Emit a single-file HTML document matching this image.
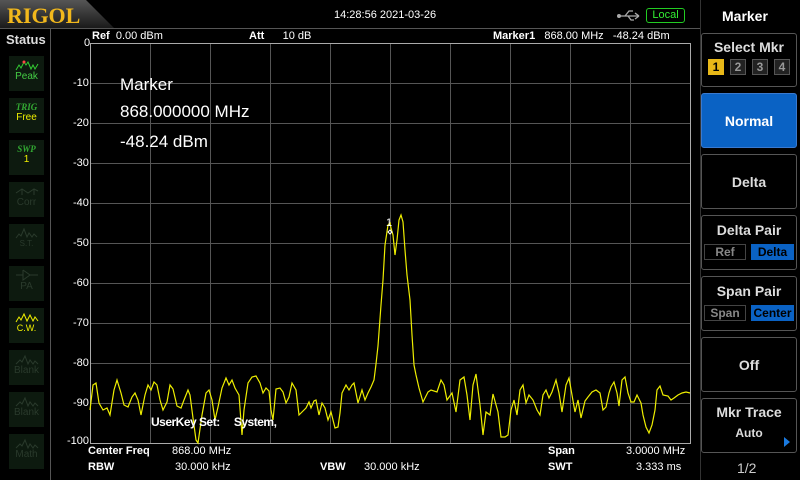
<!DOCTYPE html><html><head><style>
*{margin:0;padding:0;box-sizing:border-box}
body{width:800px;height:480px;background:#000;overflow:hidden;position:relative;font-family:"Liberation Sans",sans-serif;color:#fff}
.a{position:absolute;white-space:nowrap}
.tile{position:absolute;left:9px;width:35px;height:35px;background:#0d1a0f;text-align:center;font-size:10px}
.tile svg{display:block;margin:3px auto 0}
.btn{position:absolute;left:701px;width:96px;border:1px solid #555;border-radius:3px;text-align:center;font-weight:bold;font-size:14px;color:#ddd}
.lbl{font-size:11px;color:#fff}
.b{font-weight:bold}
</style></head><body>
<svg class="a" style="left:0;top:0" width="120" height="29"><defs><linearGradient id="g" x1="0" y1="0" x2="0" y2="1"><stop offset="0" stop-color="#555"/><stop offset="1" stop-color="#1a1a1a"/></linearGradient></defs><path d="M0 0H86L114 28H0Z" fill="url(#g)"/></svg>
<div class="a" style="left:7px;top:3px;font-family:'Liberation Serif',serif;font-weight:bold;font-size:22px;color:#f2b81c">RIGOL</div>
<div class="a" style="left:0;top:28px;width:700px;height:1px;background:#555"></div>
<div class="a" style="left:334px;top:9px;font-size:11px">14:28:56 2021-03-26</div>
<svg class="a" style="left:617px;top:10px" width="26" height="12"><path d="M1 6H22M22 6l-4-3M22 6l-4 3M8 6l4-5h4M11 6l3 4h3" stroke="#aaa" fill="none" stroke-width="1.3"/><circle cx="2" cy="6" r="2" fill="#aaa"/></svg>
<div class="a" style="left:646px;top:8px;width:39px;height:15px;border:1px solid #2c2;border-radius:3px;color:#3e3;font-size:11px;text-align:center;line-height:13px">Local</div>
<div class="a" style="left:50px;top:29px;width:1px;height:451px;background:#555"></div>
<div class="a" style="left:6px;top:32px;font-size:13px;font-weight:bold;color:#ddd">Status</div>
<div class="a" style="left:700px;top:0;width:1px;height:480px;background:#333"></div>

<div class="tile" style="top:56px;color:#4c4"><svg width="24" height="12"><path d="M1 11l3-5 2 3 3-6 2 3 2-3 3 7 2-4 2 4 3-5" stroke="#3c3" fill="none"/><circle cx="9" cy="3" r="1.5" fill="#f44"/></svg>Peak</div>
<div class="tile" style="top:98px;color:#ee0"><div style="font-family:'Liberation Serif',serif;font-style:italic;font-weight:bold;color:#3a3;font-size:9px;margin-top:4px">TRIG</div>Free</div>
<div class="tile" style="top:140px;color:#ee0"><div style="font-family:'Liberation Serif',serif;font-style:italic;font-weight:bold;color:#3a3;font-size:9px;margin-top:4px">SWP</div>1</div>
<div class="tile" style="top:182px;color:#2a3a2c"><svg width="24" height="12"><path d="M1 8l6-4 6 4 6-4 4 2M7 4v6M19 4v6" stroke="#2a3a2c" fill="none"/></svg>Corr</div>
<div class="tile" style="top:224px;color:#2a3a2c;font-size:8px"><svg width="24" height="12"><path d="M1 11l3-4 2 2 3-7 3 8 2-4 3 4 2-3 3 3" stroke="#2a3a2c" fill="none"/></svg>S.T.</div>
<div class="tile" style="top:266px;color:#2a3a2c"><svg width="24" height="12"><path d="M1 6h7M8 1v10l7-5-7-5M15 6h8" stroke="#2a3a2c" fill="none"/></svg>PA</div>
<div class="tile" style="top:308px;color:#ee0;font-size:9px"><svg width="24" height="12"><path d="M1 11l3-5 2 3 3-6 3 7 3-6 3 6 2-4 3 4" stroke="#ee0" fill="none"/></svg>C.W.</div>
<div class="tile" style="top:350px;color:#2a3a2c"><svg width="24" height="12"><path d="M1 11l4-4 2 2 3-6 3 8 2-4 3 4 2-3 3 3" stroke="#2a3a2c" fill="none"/></svg>Blank</div>
<div class="tile" style="top:392px;color:#2a3a2c"><svg width="24" height="12"><path d="M1 11l4-4 2 2 3-6 3 8 2-4 3 4 2-3 3 3" stroke="#2a3a2c" fill="none"/></svg>Blank</div>
<div class="tile" style="top:434px;color:#2a3a2c"><svg width="24" height="12"><path d="M1 11l4-4 2 2 3-6 3 8 2-4 3 4 2-3 3 3" stroke="#2a3a2c" fill="none"/></svg>Math</div>

<div class="a lbl" style="left:84px;top:37px">0</div>
<div class="a lbl" style="left:73px;top:77px">-10</div>
<div class="a lbl" style="left:73px;top:117px">-20</div>
<div class="a lbl" style="left:73px;top:157px">-30</div>
<div class="a lbl" style="left:73px;top:197px">-40</div>
<div class="a lbl" style="left:73px;top:237px">-50</div>
<div class="a lbl" style="left:73px;top:277px">-60</div>
<div class="a lbl" style="left:73px;top:317px">-70</div>
<div class="a lbl" style="left:73px;top:357px">-80</div>
<div class="a lbl" style="left:73px;top:397px">-90</div>
<div class="a lbl" style="left:67px;top:435px">-100</div>

<div class="a" style="left:92px;top:30px;font-size:11px"><b>Ref</b>&nbsp; 0.00 dBm</div>
<div class="a" style="left:249px;top:30px;font-size:11px"><b>Att</b>&nbsp;&nbsp;&nbsp;&nbsp;&nbsp; 10 dB</div>
<div class="a" style="left:493px;top:30px;font-size:11px"><b>Marker1</b>&nbsp;&nbsp; 868.00 MHz&nbsp;&nbsp; -48.24 dBm</div>

<svg class="a" style="left:0;top:0" width="700" height="480">
<g stroke="#555" stroke-width="1">
<path d="M150.5 43V443M210.5 43V443M270.5 43V443M330.5 43V443M390.5 43V443M450.5 43V443M510.5 43V443M570.5 43V443M630.5 43V443"/>
<path d="M90 83.5H690M90 123.5H690M90 163.5H690M90 203.5H690M90 243.5H690M90 283.5H690M90 323.5H690M90 363.5H690M90 403.5H690"/>
</g>
<rect x="90.5" y="43.5" width="600" height="400" fill="none" stroke="#aaa"/>
<polyline fill="none" stroke="#ee0" stroke-width="1.2" points="90,410 93,385 96,383 99,403 103,410 107,408 110,415 114,390 117,380 121,393 124,405 128,407 132,397 135,393 138,400 141,415 145,395 148,385 151,390 154,382 157,385 160,400 163,410 167,402 170,385 173,389 177,406 181,408 184,400 188,390 190,395 193,418 196,440 198,443 202,415 206,393 209,390 212,400 215,420 218,407 222,388 226,378 229,385 232,380 235,388 239,395 242,435 244,410 248,383 252,377 256,376 260,383 263,393 266,388 269,391 271,410 273,420 276,389 280,388 283,392 286,403 289,397 292,383 296,390 299,415 303,411 306,408 309,402 311,408 314,401 316,400 319,415 322,403 325,408 328,420 331,412 335,428 338,427 340,413 342,393 346,385 349,390 352,385 354,383 358,403 362,390 365,400 368,393 371,387 374,380 376,364 378,346 381,305 383,280 385,245 388,225 390,223 391,228 393,235 395,255 397,240 399,220 401,215 403,222 405,250 407,275 410,300 412,335 414,365 416,375 419,388 421,395 423,402 428,392 431,390 437,392 441,380 444,385 447,400 452,393 456,412 460,380 464,377 467,395 470,420 473,385 476,374 480,405 483,435 486,412 490,415 493,394 498,412 501,437 505,437 508,435 511,410 514,400 517,415 520,390 523,385 526,403 529,395 533,400 537,410 540,415 543,395 546,390 549,398 552,392 556,380 559,393 562,412 566,385 569,378 572,395 575,412 578,400 581,418 585,401 588,397 592,392 596,390 600,393 603,410 606,407 609,393 611,387 614,382 617,393 619,406 622,380 625,377 628,393 631,402 634,402 637,395 641,403 643,415 646,427 649,433 652,425 655,410 657,390 660,386 663,395 668,396 671,400 674,398 678,395 682,393 686,392 690,393"/>
<text x="386" y="226" fill="#fff" font-size="11" font-family="Liberation Sans">1</text>
<path d="M390 230l2 2-2 2-2-2z" stroke="#fff" fill="none"/>
</svg>

<div class="a" style="left:120px;top:75px;font-size:17px">Marker</div>
<div class="a" style="left:120px;top:102px;font-size:17px">868.000000 MHz</div>
<div class="a" style="left:120px;top:132px;font-size:17px">-48.24 dBm</div>
<div class="a b" style="left:151px;top:415px;font-size:12px;letter-spacing:-0.5px">UserKey Set:&nbsp;&nbsp;&nbsp;&nbsp; System,</div>

<div class="a" style="left:88px;top:445px;font-size:11px"><b>Center Freq</b></div>
<div class="a" style="left:172px;top:445px;font-size:11px">868.00 MHz</div>
<div class="a b" style="left:548px;top:445px;font-size:11px">Span</div>
<div class="a" style="left:626px;top:445px;font-size:11px">3.0000 MHz</div>
<div class="a b" style="left:88px;top:461px;font-size:11px">RBW</div>
<div class="a" style="left:175px;top:461px;font-size:11px">30.000 kHz</div>
<div class="a b" style="left:320px;top:461px;font-size:11px">VBW</div>
<div class="a" style="left:364px;top:461px;font-size:11px">30.000 kHz</div>
<div class="a b" style="left:548px;top:461px;font-size:11px">SWT</div>
<div class="a" style="left:636px;top:461px;font-size:11px">3.333 ms</div>

<div class="a b" style="left:722px;top:8px;font-size:14px">Marker</div>
<div class="btn" style="top:33px;height:54px"><div style="margin-top:5px">Select Mkr</div>
<div style="display:flex;justify-content:space-around;padding:0 3px;margin-top:4px;font-size:12px">
<span style="width:16px;height:16px;background:#e8b818;color:#000;line-height:16px">1</span><span style="width:16px;height:16px;background:#222;border:1px solid #555;color:#999;line-height:14px">2</span><span style="width:16px;height:16px;background:#222;border:1px solid #555;color:#999;line-height:14px">3</span><span style="width:16px;height:16px;background:#222;border:1px solid #555;color:#999;line-height:14px">4</span></div></div>
<div class="btn" style="top:93px;height:55px;background:#0a62c4;border-color:#3a7ad0;color:#fff;line-height:55px">Normal</div>
<div class="btn" style="top:154px;height:55px;line-height:55px">Delta</div>
<div class="btn" style="top:215px;height:55px"><div style="margin-top:6px">Delta Pair</div>
<div style="display:flex;justify-content:space-between;padding:0 2px;margin-top:6px;font-size:12px"><span style="width:42px;border:1px solid #444;color:#888;line-height:14px">Ref</span><span style="width:43px;background:#0a62c4;color:#000;line-height:16px">Delta</span></div></div>
<div class="btn" style="top:276px;height:55px"><div style="margin-top:6px">Span Pair</div>
<div style="display:flex;justify-content:space-between;padding:0 2px;margin-top:6px;font-size:12px"><span style="width:42px;border:1px solid #444;color:#888;line-height:14px">Span</span><span style="width:43px;background:#0a62c4;color:#000;line-height:16px">Center</span></div></div>
<div class="btn" style="top:337px;height:55px;line-height:55px">Off</div>
<div class="btn" style="top:398px;height:55px"><div style="margin-top:5px">Mkr Trace</div><div style="font-size:12px;margin-top:6px">Auto</div>
<div style="position:absolute;right:6px;bottom:5px;width:0;height:0;border-left:6px solid #1a7ae0;border-top:5px solid transparent;border-bottom:5px solid transparent"></div></div>
<div class="a" style="left:737px;top:460px;font-size:14px;color:#ccc">1/2</div>
</body></html>
